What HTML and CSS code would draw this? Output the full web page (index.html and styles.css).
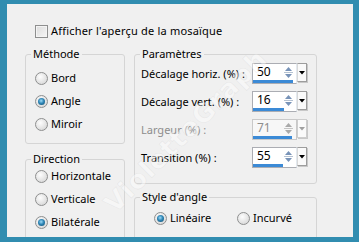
FILE: index.html
```html
<!DOCTYPE html>
<html lang="fr">
<head>
<meta charset="utf-8">
<title>Mosaïque</title>
<link rel="stylesheet" href="styles.css">
</head>
<body>
<div class="frame">
  <div class="panel">
    <div class="check-row"><span class="checkbox"></span><span class="check-label">Afficher l'aperçu de la mosaïque</span></div>
    <div class="columns">
      <div class="col">
        <fieldset class="group methode">
          <legend>Méthode</legend>
          <div class="radios">
            <div class="radio-row"><span class="radio"></span><span>Bord</span></div>
            <div class="radio-row"><span class="radio on"></span><span>Angle</span></div>
            <div class="radio-row"><span class="radio"></span><span>Miroir</span></div>
          </div>
        </fieldset>
        <fieldset class="group direction">
          <legend>Direction</legend>
          <div class="radios dir">
            <div class="radio-row"><span class="radio"></span><span>Horizontale</span></div>
            <div class="radio-row"><span class="radio"></span><span>Verticale</span></div>
            <div class="radio-row"><span class="radio on"></span><span>Bilatérale</span></div>
          </div>
        </fieldset>
      </div>
      <div class="col">
        <fieldset class="group params">
          <legend>Paramètres</legend>
          <div class="param-list">
            <div class="param-row">
              <span class="param-label">Décalage horiz. (%) :</span>
              <div class="spin">
                <div class="spin-field">
                  <div class="spin-top"><span class="spin-value">50</span>
                    <svg class="arrows" width="11" height="15" viewBox="0 0 11 15"><path d="M5.5 2 L9 6 H2 Z" fill="#7893b8"/><line x1="1" y1="7.5" x2="10" y2="7.5" stroke="#b5c2d2"/><path d="M2 9 H9 L5.5 13 Z" fill="#7893b8"/></svg>
                  </div>
                  <div class="bar" style="width:40px"></div>
                </div>
                <div class="drop"><svg width="6" height="4" viewBox="0 0 6 4"><path d="M0 0 H6 L3 3.5 Z" fill="#000"/></svg></div>
              </div>
            </div>
            <div class="param-row">
              <span class="param-label">Décalage vert. (%) :</span>
              <div class="spin">
                <div class="spin-field">
                  <div class="spin-top"><span class="spin-value">16</span>
                    <svg class="arrows" width="11" height="15" viewBox="0 0 11 15"><path d="M5.5 2 L9 6 H2 Z" fill="#7893b8"/><line x1="1" y1="7.5" x2="10" y2="7.5" stroke="#b5c2d2"/><path d="M2 9 H9 L5.5 13 Z" fill="#7893b8"/></svg>
                  </div>
                  <div class="bar" style="width:31px"></div>
                </div>
                <div class="drop"><svg width="6" height="4" viewBox="0 0 6 4"><path d="M0 0 H6 L3 3.5 Z" fill="#000"/></svg></div>
              </div>
            </div>
            <div class="param-row disabled">
              <span class="param-label">Largeur (%) :</span>
              <div class="spin">
                <div class="spin-field">
                  <div class="spin-top"><span class="spin-value">71</span>
                    <svg class="arrows" width="11" height="15" viewBox="0 0 11 15"><path d="M5.5 2 L9 6 H2 Z" fill="#a9a9a9"/><line x1="1" y1="7.5" x2="10" y2="7.5" stroke="#c4c4c4"/><path d="M2 9 H9 L5.5 13 Z" fill="#a9a9a9"/></svg>
                  </div>
                  <div class="bar" style="width:39px"></div>
                </div>
                <div class="drop"><svg width="6" height="4" viewBox="0 0 6 4"><path d="M0 0 H6 L3 3.5 Z" fill="#a0a0a0"/></svg></div>
              </div>
            </div>
            <div class="param-row">
              <span class="param-label">Transition (%) :</span>
              <div class="spin">
                <div class="spin-field">
                  <div class="spin-top"><span class="spin-value">55</span>
                    <svg class="arrows" width="11" height="15" viewBox="0 0 11 15"><path d="M5.5 2 L9 6 H2 Z" fill="#7893b8"/><line x1="1" y1="7.5" x2="10" y2="7.5" stroke="#b5c2d2"/><path d="M2 9 H9 L5.5 13 Z" fill="#7893b8"/></svg>
                  </div>
                  <div class="bar" style="width:30px"></div>
                </div>
                <div class="drop"><svg width="6" height="4" viewBox="0 0 6 4"><path d="M0 0 H6 L3 3.5 Z" fill="#000"/></svg></div>
              </div>
            </div>
          </div>
        </fieldset>
        <fieldset class="group style">
          <legend>Style d'angle</legend>
          <div class="style-row">
            <div class="radio-row first"><span class="radio on"></span><span>Linéaire</span></div>
            <div class="radio-row"><span class="radio"></span><span>Incurvé</span></div>
          </div>
        </fieldset>
      </div>
    </div>
    <div class="watermark">VioletteGraph</div>
  </div>
</div>
</body>
</html>
```
FILE: styles.css
```css
* { box-sizing: border-box; }
html, body { margin: 0; padding: 0; }
body {
  width: 359px;
  height: 242px;
  overflow: hidden;
  background: #318db0;
  font-family: "Noto Sans", "Open Sans", sans-serif;
  font-size: 11px;
  color: #000;
}
.frame {
  width: 359px;
  height: 242px;
  border-style: solid;
  border-color: #318db0;
  border-width: 4px 6px 5px 7px;
  background: #f0f0f0;
}
.panel {
  position: relative;
  height: 100%;
  overflow: hidden;
  padding: 19px 0 0 18px;
}
.check-row {
  display: flex;
  align-items: center;
  gap: 3px;
  height: 16px;
  margin-left: 10px;
  line-height: 16px;
  white-space: nowrap;
}
.check-label { font-size: 11px; letter-spacing: 0.2px; }
.checkbox {
  flex: none;
  width: 13px;
  height: 13px;
  border: 1px solid #8e8f8f;
  background: linear-gradient(135deg, #dcdcdc, #f6f6f6);
  box-shadow: inset 0 0 0 1px #f4f4f4;
}
.columns {
  display: grid;
  grid-template-columns: 100px 183px;
  column-gap: 9px;
  margin-top: 7px;
}
.col { display: flex; flex-direction: column; }
.group {
  margin: 0;
  padding: 0;
  min-width: 0;
  border: 1px solid #d5d5d5;
  border-radius: 3px;
}
.group legend {
  margin-left: 5px;
  padding: 0 2px;
  line-height: 16px;
  height: 16px;
}
.methode { height: 98px; }
.direction { height: 120px; margin-top: 7px; }
.params { height: 138px; }
.style { height: 80px; margin-top: 5px; }
.radios {
  display: flex;
  flex-direction: column;
  gap: 5px;
  padding: 7px 0 0 9px;
}
.radios.dir { padding-top: 0; }
.radio-row {
  display: flex;
  align-items: center;
  gap: 3px;
  height: 18px;
  line-height: 16px;
  white-space: nowrap;
}
.radio {
  position: relative;
  flex: none;
  width: 13px;
  height: 13px;
  border-radius: 50%;
  border: 1px solid #8e8f8f;
  background: radial-gradient(circle at 40% 35%, #fdfdfd, #d9d9d9 80%);
}
.radio.on::after {
  content: "";
  position: absolute;
  left: 2px;
  top: 2px;
  width: 7px;
  height: 7px;
  border-radius: 50%;
  background: radial-gradient(circle at 45% 40%, #9fdcf8 0, #2f86b6 45%, #0f4868 100%);
}
.param-list {
  display: flex;
  flex-direction: column;
  gap: 7px;
  padding: 1px 0 0 6px;
}
.param-row {
  display: flex;
  align-items: center;
  height: 21px;
}
.param-label {
  flex: none;
  width: 111px;
  line-height: 16px;
  white-space: nowrap;
}
.disabled .param-label, .disabled .spin-value { color: #8d8d8d; }
.spin { display: flex; align-items: flex-start; height: 21px; }
.spin-field {
  display: flex;
  flex-direction: column;
  width: 45px;
  height: 21px;
  border: 1px solid #abadb3;
  border-right-color: #e3e9ef;
  background: #fff;
}
.disabled .spin-field { border-color: #c9c9c9; background: #f7f7f7; }
.spin-top {
  flex: 1;
  display: flex;
  align-items: center;
  justify-content: space-between;
  padding: 0 2px 0 4px;
}
.spin-value { font-size: 12px; line-height: 16px; }
.arrows { display: block; }
.bar {
  height: 3px;
  background: #3b8ad6;
}
.drop {
  display: flex;
  align-items: center;
  justify-content: center;
  width: 10px;
  height: 19px;
  border: 1px solid #9d9d9d;
  border-left-color: #d8d8d8;
  background: #fafafa;
  box-shadow: 1px 1px 0 #c8c8c8;
}
.disabled .drop { border-color: #cdcdcd; }
.style-row {
  display: flex;
  padding: 4px 0 0 19px;
}
.style-row .first { width: 83px; }
.watermark {
  position: absolute;
  left: 70px;
  top: 112px;
  font-family: "DejaVu Sans", sans-serif;
  font-weight: bold;
  font-size: 26px;
  letter-spacing: 1px;
  color: rgba(255, 255, 255, 0.45);
  -webkit-text-stroke: 0.6px rgba(175, 175, 175, 0.18);
  transform: rotate(-45deg);
  white-space: nowrap;
  pointer-events: none;
}
```
